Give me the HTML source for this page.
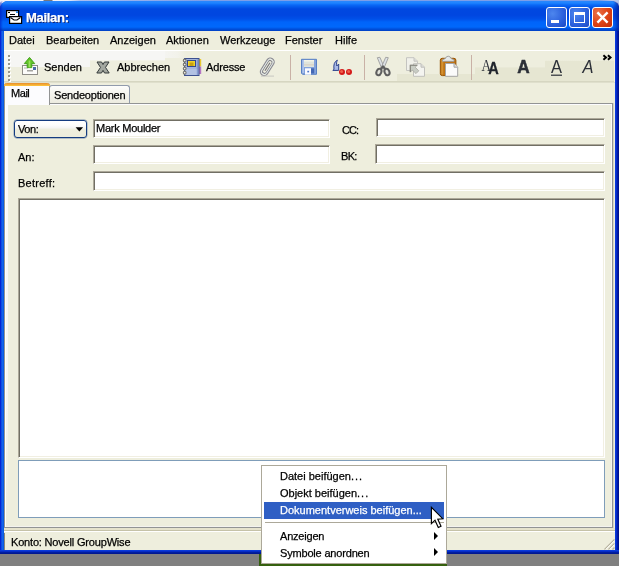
<!DOCTYPE html>
<html lang="de">
<head>
<meta charset="utf-8">
<title>Mailan:</title>
<style>
*{box-sizing:border-box;margin:0;padding:0}
html,body{width:619px;height:566px;overflow:hidden;background:#808080}
body{position:relative;font-family:"Liberation Sans",sans-serif;font-size:11px;color:#000;line-height:13px}
.a{position:absolute}
.t{position:absolute;white-space:nowrap;line-height:13px;will-change:transform;-webkit-text-stroke:.25px currentColor}
#topstrip{left:0;top:0;width:619px;height:3px;background:linear-gradient(to right,#f2f2f8 0,#f2f2f8 43px,#77777c 44px,#77777c 52px,#f2f2f8 53px,#e8ecf8 68px,#a9bdf0 80px,#7d9ee8 200px,#7d9ee8 600px,#b4c2e8 612px)}
#win{left:0;top:1px;width:619px;height:553px;border-radius:8px 8px 0 0;
 background:linear-gradient(to right,#0019cf 0,#0831d9 1px,#166aee 2px,#0855dd 4px,#0855dd 615px,#0a3ce0 615px,#0634d6 616px,#001aa8 617.500px,#000c80 619px)}
#winbot{left:0;top:550px;width:619px;height:4px;background:linear-gradient(to bottom,#0a45dc 0,#0831d9 1px,#001ea0 2.5px,#00138c 4px)}
#title{left:0;top:1px;width:619px;height:30px;border-radius:8px 8px 0 0;
 background:linear-gradient(to bottom,#2a86fc 0,#1e84ff 2px,#0a68f6 4px,#0458ea 6px,#0048e0 8px,#0046e0 14px,#0050e8 18px,#0064fa 21px,#0068fc 26px,#0050dc 28px,#0040c4 30px)}
#titletxt{left:26px;top:10px;font-weight:bold;font-size:13px;color:#fff;text-shadow:1px 1px 0 #0a1f6e;line-height:15px;letter-spacing:-.3px}
.tb{top:7px;width:21px;height:21px;border:1px solid #fff;border-radius:3px;background:radial-gradient(circle at 30% 30%,#4d86ee 0,#2a5fdc 60%,#1c49c4 100%)}
#bclose{background:radial-gradient(circle at 25% 25%,#ea7048 0,#de4418 50%,#c02c08 100%)}
#client{left:4px;top:31px;width:611px;height:519px;background:#eeeedd}
#toolbar{left:4px;top:51px;width:611px;height:30px;background:#eeeede}
#tbtop{left:4px;top:50px;width:611px;height:1px;background:#fff}
#tbbot{left:4px;top:81px;width:611px;height:2px;background:linear-gradient(to bottom,#d4d4be 0,#d8d8c4 1px,#e6e6d4 2px)}
#tbright{left:614px;top:50px;width:1px;height:32px;background:#f8f2da}
.sep{position:absolute;top:55px;width:1px;height:25px;background:#c9b1a6}
.inp{position:absolute;background:#fff;border:1px solid;border-color:#aca899 #fff #fff #aca899;box-shadow:inset 1px 1px 0 #716f64,inset -1px -1px 0 #f1efe2}
.arr{position:absolute;width:0;height:0;border:4px solid transparent;border-left:4px solid #000;border-right:none}
</style>
</head>
<body>
<div class="a" style="left:0;top:0;width:10px;height:10px;background:#e4e9f6"></div><div class="a" style="left:609px;top:0;width:10px;height:10px;background:#a4b4e4"></div>
<div id="topstrip" class="a"></div>
<div id="win" class="a"></div>
<div id="winbot" class="a"></div>
<div id="title" class="a"></div>
<svg class="a" style="left:6px;top:10px" width="17" height="15" viewBox="0 0 17 15">
 <rect x=".6" y=".6" width="12" height="6.800" fill="#fff" stroke="#000" stroke-width="1.200"/>
 <rect x="2" y="2" width="2" height="1" fill="#000"/><rect x="4" y="4" width="5" height="1" fill="#000"/><rect x="10" y="1.200" width="2" height="1.800" fill="#2a8cf0"/>
 <rect x="3.600" y="6.600" width="12" height="6.800" fill="#fff" stroke="#000" stroke-width="1.200"/>
 <path d="M4.500 7.500 L8 10 L11 10 L14.500 7.500" fill="none" stroke="#000" stroke-width="1.100"/>
</svg>
<div class="a" style="left:613px;top:1px;width:6px;height:30px;border-radius:0 8px 0 0;background:linear-gradient(to right,rgba(0,30,160,0),rgba(0,24,150,.75))"></div>
<div class="a" style="left:0;top:1px;width:3px;height:30px;border-radius:8px 0 0 0;background:linear-gradient(to left,rgba(0,30,200,0),rgba(0,24,190,.6))"></div>
<div id="titletxt" class="t">Mailan:</div>
<div class="a tb" style="left:546px"><div class="a" style="left:4px;top:12px;width:8px;height:3px;background:#fff"></div></div>
<div class="a tb" style="left:569px"><div class="a" style="left:4px;top:4px;width:11px;height:11px;border:1px solid #fff;border-top-width:3px"></div></div>
<div class="a tb" id="bclose" style="left:592px">
 <svg class="a" style="left:0;top:0" width="19" height="19" viewBox="0 0 19 19"><path d="M4.400 4.400 L14.600 14.600 M14.600 4.400 L4.400 14.600" stroke="#fff" stroke-width="2.400" fill="none"/></svg>
</div>

<div id="client" class="a"></div>
<!-- menu bar -->
<span class="t" style="left:9px;top:34px">Datei</span>
<span class="t" style="left:46px;top:34px">Bearbeiten</span>
<span class="t" style="left:110px;top:34px">Anzeigen</span>
<span class="t" style="left:166px;top:34px">Aktionen</span>
<span class="t" style="left:220px;top:34px">Werkzeuge</span>
<span class="t" style="left:285px;top:34px">Fenster</span>
<span class="t" style="left:335px;top:34px">Hilfe</span>

<!-- toolbar -->
<div id="toolbar" class="a"></div>
<div class="a" style="left:4px;top:51px;width:86px;height:30px;background:linear-gradient(to bottom,#f6f6f4 0,#f6f6f4 15.5px,#eeeede 16.5px,#eeeede 30px)"></div>
<div class="a" style="left:90px;top:51px;width:75px;height:30px;background:linear-gradient(to bottom,#f6f6f4 0,#f6f6f4 8.9px,#eeeede 9.9px,#eeeede 30px)"></div>
<div class="a" style="left:165px;top:51px;width:21px;height:7px;background:linear-gradient(to right,#f4f4f0 0,#f2f2ea 60%,#eeeede 100%)"></div>
<div class="a" style="left:240px;top:51px;width:78px;height:30px;background:linear-gradient(to bottom,#eeeede 0,#eeeede 30px)"></div>
<div class="a" style="left:318px;top:51px;width:79px;height:30px;background:linear-gradient(to bottom,#eeeede 0,#eeeede 30px)"></div>
<div class="a" style="left:397px;top:51px;width:78px;height:30px;background:linear-gradient(to bottom,#eeeede 0,#eeeede 22.5px,#e6e6d2 23.5px)"></div>
<div class="a" style="left:475px;top:51px;width:70px;height:30px;background:linear-gradient(to bottom,#eeeede 0,#eeeede 15.9px,#e6e6d2 16.9px)"></div>
<div class="a" style="left:545px;top:51px;width:70px;height:30px;background:linear-gradient(to bottom,#eeeede 0,#eeeede 9.3px,#e6e6d2 10.3px)"></div>
<div id="tbtop" class="a"></div><div id="tbbot" class="a"></div><div id="tbright" class="a"></div>
<div class="a" style="left:9px;top:56px;width:2px;height:26px;background:repeating-linear-gradient(to bottom,#fff 0,#fff 2px,transparent 2px,transparent 4px)"></div>
<div class="a" style="left:8px;top:55px;width:2px;height:26px;background:repeating-linear-gradient(to bottom,#98968a 0,#98968a 2px,transparent 2px,transparent 4px)"></div>
<span class="t" style="left:43.500px;top:61px">Senden</span>
<span class="t" style="left:117px;top:61px">Abbrechen</span>
<span class="t" style="left:206px;top:61px;letter-spacing:-.15px">Adresse</span>
<div class="sep" style="left:290px"></div>
<div class="sep" style="left:364px"></div>
<div class="sep" style="left:471px"></div>
<!--ICONS-START-->
<svg class="a" style="left:0;top:50px" width="619" height="32" viewBox="0 50 619 32">
 <!-- send -->
 <rect x="22.500" y="65.500" width="15" height="9" fill="#fcfcfa" stroke="#8e8d88"/>
 <rect x="33" y="67" width="3" height="3" fill="#4a6ca8"/>
 <rect x="24" y="67.500" width="4" height="1" fill="#b4b4b0"/>
 <rect x="27" y="70" width="6" height="1.500" fill="#a4a4a0"/>
 <path d="M29.500 57.400 L34.700 63.600 L31.800 63.600 L31.800 67.600 L27.200 67.600 L27.200 63.600 L24.300 63.600 Z" fill="#62c428" stroke="#3a9c12" stroke-width=".9" stroke-linejoin="round"/>
 <rect x="28.700" y="60.500" width="1.600" height="6.800" fill="#9be060"/>
 <!-- X -->
 <path d="M97 62 L101.600 62 L103 64.600 L104.400 62 L109 62 L105.500 67.400 L109.200 73 L104.500 73 L103 70.300 L101.500 73 L96.800 73 L100.500 67.400 Z" fill="#a4a8a0" stroke="#343a3a" stroke-width="1" stroke-linejoin="round"/>
 <!-- address book -->
 <rect x="199" y="59" width="2.200" height="7.500" fill="#e8c830"/>
 <rect x="199" y="66.500" width="2.200" height="7.500" fill="#b476c4"/>
 <rect x="184.500" y="58.500" width="14.500" height="17" fill="#a4b5dc" stroke="#3c5090"/>
 <rect x="185.500" y="69" width="12.500" height="6" fill="#bccae8" opacity=".6"/><rect x="196.800" y="59.500" width="1.400" height="15.500" fill="#7088c4" opacity=".7"/>
 <rect x="187.500" y="60.500" width="8" height="6" fill="#f0d228" stroke="#34488c"/>
 <rect x="189.500" y="62.500" width="4" height="3.500" fill="#c8a010"/>
 <g fill="#ecece8" stroke="#74746f" stroke-width="1.100">
  <circle cx="184.700" cy="60.500" r="1.400"/><circle cx="184.700" cy="64.500" r="1.400"/><circle cx="184.700" cy="68.600" r="1.400"/><circle cx="184.700" cy="72.700" r="1.400"/>
 </g>
 <!-- paperclip -->
 <g transform="rotate(32 267.500 66.500)" fill="none">
  <rect x="263.700" y="57.300" width="7.600" height="19.200" rx="3.800" stroke="#8c8c94" stroke-width="1.300"/>
  <rect x="265.500" y="59.800" width="4.200" height="14.400" rx="2.100" stroke="#84848c" stroke-width="1.100"/><path d="M267.600 62 L267.600 71.500" stroke="#74747c" stroke-width="1.200"/>
  <rect x="264.700" y="58.400" width="5.600" height="17" rx="2.800" stroke="#dfe7e7" stroke-width=".8"/>
 </g>
 <rect x="261" y="75.500" width="13" height="1.200" fill="#c4c4c0" opacity=".8"/>
 <!-- floppy -->
 <path d="M301.500 59.300 L316.500 59.300 L316.500 74.300 L302.500 74.300 L301.500 73.300 Z" fill="#84a3dc" stroke="#5880c4"/>
 <rect x="302.500" y="60" width="1.300" height="13" fill="#b8ccf0"/>
 <rect x="304" y="60" width="10" height="7" fill="#dfe4dc"/>
 <rect x="304" y="60" width="10" height="1.500" fill="#f4f4e8"/>
 <rect x="304" y="64.500" width="10" height=".8" fill="#d8c8b8"/>
 <rect x="305" y="68.300" width="6" height="6.400" fill="#fbfbff"/>
 <rect x="311" y="68.300" width="3.200" height="5.200" fill="#4468b4"/>
 <rect x="307.300" y="70.800" width="1.800" height="1.600" fill="#4f78c8"/>
 <!-- quill + dots -->
 <path d="M337.400 60.200 C334.500 61.500 333.300 64.500 334 69.500 L332.800 70.400 L338.700 70.400 L338.700 64 L336.800 66 C336.300 63.500 336.600 61.800 337.400 60.200 Z" fill="#a9bae6" stroke="#2a3f8c" stroke-width="1" stroke-linejoin="round"/>
 <circle cx="342" cy="71.900" r="3" fill="#d41a1a"/><circle cx="341.600" cy="71.500" r="1.500" fill="#f0604c"/>
 <circle cx="349" cy="71.900" r="3" fill="#d41a1a"/><circle cx="348.600" cy="71.500" r="1.500" fill="#f0604c"/>
 <!-- scissors -->
 <path d="M377.300 57.700 L379.900 57.300 L384.600 68 L382 69 Z" fill="#dce0e4" stroke="#949494" stroke-width=".8"/>
 <path d="M388.300 57.700 L385.700 57.300 L381 68 L383.600 69 Z" fill="#dce0e4" stroke="#949494" stroke-width=".8"/>
 <ellipse cx="378.900" cy="72" rx="2.400" ry="3.300" fill="#e4e4dc" stroke="#5e5e5e" stroke-width="2" transform="rotate(22 378.900 72)"/>
 <ellipse cx="387" cy="72" rx="2.400" ry="3.300" fill="#e4e4dc" stroke="#5e5e5e" stroke-width="2" transform="rotate(-22 387 72)"/>
 <path d="M380.300 69.200 L383 66.600 L385.700 69.200" fill="none" stroke="#5e5e5e" stroke-width="2.200"/>
 <!-- copy (disabled) -->
 <path d="M406.500 57.700 L414 57.700 L417.500 61.200 L417.500 70.500 L406.500 70.500 Z" fill="#f0f0ea" stroke="#c4c4c0"/>
 <path d="M414 57.700 L414 61.200 L417.500 61.200" fill="#dcdcd8" stroke="#c4c4c0"/>
 <path d="M413.500 63.700 L421 63.700 L424.500 67.200 L424.500 76.300 L413.500 76.300 Z" fill="#f4f4f0" stroke="#c0c0bc"/>
 <path d="M421 63.700 L421 67.200 L424.500 67.200" fill="#dcdcd8" stroke="#c0c0bc"/>
 <path d="M410.300 65.200 L417.300 65.200 L415.200 67.200 L418.800 70.800 L416 73.600 L412.400 70 L410.300 72.200 Z" fill="#c8ccc4" stroke="#a8a8a0" stroke-width=".8"/><path d="M410.300 72 L410.300 65.200 L417.300 65.200" fill="none" stroke="#84847c" stroke-width="1.100"/>
 <!-- paste -->
 <rect x="440.300" y="58.300" width="15.600" height="17.300" rx="2" fill="#c07414" stroke="#985404"/>
 <rect x="441.300" y="59.500" width="2" height="15" fill="#d89838" opacity=".8"/>
 <path d="M442.500 61.300 L442.500 59.700 L445.300 58.600 L446.300 56.900 Q448.200 55.500 450.100 56.900 L451.100 58.600 L454 59.700 L454 61.300 Z" fill="#e6eaea" stroke="#9a9a9a" stroke-width=".9"/>
 <path d="M445.500 63.500 L454 63.500 L457.700 67.200 L457.700 76.300 L445.500 76.300 Z" fill="#fbfbfb" stroke="#a4a4a4"/>
 <path d="M454 63.500 L454 67.200 L457.700 67.200" fill="#e0e0e0" stroke="#a4a4a4"/>
 <!-- chevron -->
 <path d="M603.400 55.200 L606 57.500 L603.400 59.800 M607.900 55.200 L610.500 57.500 L607.900 59.800" fill="none" stroke="#000" stroke-width="2"/>
 <!-- font icons -->
 <text x="481.500" y="70.800" font-family="Liberation Serif,serif" font-size="17" fill="#30343c" textLength="9.600" lengthAdjust="spacingAndGlyphs">A</text>
 <text x="488.200" y="74.400" font-family="Liberation Sans,sans-serif" font-weight="bold" font-size="16.500" fill="#20242c" stroke="#20242c" stroke-width=".3" textLength="10.500" lengthAdjust="spacingAndGlyphs">A</text>
 <text x="517.300" y="73.100" font-family="Liberation Sans,sans-serif" font-weight="bold" font-size="17.500" fill="#2c3038" stroke="#2c3038" stroke-width=".5" textLength="12.400" lengthAdjust="spacingAndGlyphs">A</text>
 <text x="551" y="73.100" font-family="Liberation Sans,sans-serif" font-size="17.500" fill="#2c3038" textLength="11" lengthAdjust="spacingAndGlyphs">A</text>
 <rect x="551" y="74.600" width="11" height="1.200" fill="#2c3038"/>
 <text x="582.500" y="73.100" font-family="Liberation Sans,sans-serif" font-style="italic" font-size="17.500" fill="#2c3038" textLength="11" lengthAdjust="spacingAndGlyphs">A</text>
</svg>
<!--ICONS-END-->

<!-- tab pane -->
<div class="a" style="left:4px;top:103px;width:609px;height:425px;border:1px solid #929494;background:linear-gradient(to bottom,#fcfcfe,#f4f3ee)"></div>
<div class="a" style="left:5px;top:104px;width:1px;height:423px;background:#fff"></div>
<div class="a" style="left:613px;top:103px;width:1px;height:425px;background:#d6d4c2"></div>
<div class="a" style="left:8px;top:105px;width:603px;height:421px;background:#eeeedd"></div>
<div class="a" style="left:6px;top:400px;width:2px;height:126px;background:linear-gradient(to bottom,rgba(236,233,216,0),#eeeedd)"></div>
<!-- tabs -->
<div class="a" style="left:49px;top:85px;width:80.500px;height:18px;border:1px solid #919bac;border-bottom:none;border-radius:3px 3px 0 0;background:linear-gradient(#fdfdfb,#ecebe0)"></div>
<span class="t" style="left:53.500px;top:89px;letter-spacing:-.2px">Sendeoptionen</span>
<div class="a" style="left:4px;top:83px;width:46px;height:22px;border:1px solid #929494;border-bottom:none;border-top:none;border-radius:3px 3px 0 0;background:#fcfcfe"></div>
<div class="a" style="left:4px;top:83px;width:46px;height:3px;border-radius:3px 3px 0 0;background:linear-gradient(#e68b2c,#ffc73c)"></div>
<span class="t" style="left:11px;top:87px;letter-spacing:-.45px">Mail</span>

<!-- form -->
<div class="a" style="left:14px;top:120px;width:73px;height:18px;border:1px solid #143c80;border-radius:3px;box-shadow:0 0 0 .4px rgba(20,60,128,.55);background:linear-gradient(to bottom,#fff 0,#fdfdfc 4px,#f6f6f4 6.500px,#eeeede 8.500px,#ececdb 100%)"></div>
<span class="t" style="left:18px;top:123px;letter-spacing:-.4px">Von:</span>
<svg class="a" style="left:75px;top:127px" width="9" height="5" viewBox="0 0 9 5"><path d="M.6 .3 L8.100 .3 L4.350 4.400 Z" fill="#000"/></svg>
<div class="inp" style="left:93px;top:119px;width:237px;height:19px"></div>
<span class="t" style="left:95.500px;top:122px;letter-spacing:-.25px">Mark Moulder</span>
<span class="t" style="left:342px;top:124px;letter-spacing:-.9px">CC:</span>
<div class="inp" style="left:376px;top:118px;width:229px;height:19px"></div>
<span class="t" style="left:18px;top:151px">An:</span>
<div class="inp" style="left:93px;top:145px;width:237px;height:19px"></div>
<span class="t" style="left:341px;top:150px;letter-spacing:-.7px">BK:</span>
<div class="inp" style="left:375px;top:144px;width:230px;height:20px"></div>
<span class="t" style="left:18px;top:177px;letter-spacing:.25px">Betreff:</span>
<div class="inp" style="left:93px;top:171px;width:512px;height:20px"></div>
<div class="inp" style="left:18px;top:198px;width:587px;height:260px"></div>
<div class="a" style="left:18px;top:460px;width:587px;height:58px;background:#fff;border:1px solid #7f9db9"></div>

<!-- status bar -->
<div class="a" style="left:4px;top:528px;width:611px;height:2px;background:#e6e3cc"></div>
<div class="a" style="left:4px;top:530px;width:611px;height:1px;background:#c5c2a8"></div>
<div class="a" style="left:4px;top:531px;width:611px;height:1px;background:#fff"></div>
<div class="a" style="left:4px;top:533px;width:1px;height:17px;background:#8a887a"></div>
<span class="t" style="left:11px;top:536px;letter-spacing:-.18px">Konto: Novell GroupWise</span>
<svg class="a" style="left:603px;top:538px" width="12" height="12" viewBox="0 0 12 12"><path d="M11.500 1.500 L1.500 11.500 M11.500 5.500 L5.500 11.500 M11.500 9.500 L9.500 11.500" stroke="#b8b4a0" stroke-width="1.400"/><path d="M11.500 2.500 L2.500 11.500 M11.500 6.500 L6.500 11.500" stroke="#fff" stroke-width=".8"/></svg>

<!-- desktop strip behind menu -->
<div class="a" style="left:259px;top:554px;width:188px;height:12px;background:#35600f"></div>
<!-- context menu -->
<div class="a" style="left:261px;top:465px;width:186px;height:99px;background:#fff;border:1px solid #aca899"></div>
<span class="t" style="left:280px;top:470px">Datei beifügen<span style="letter-spacing:1px">...</span></span>
<span class="t" style="left:280px;top:487px">Objekt beifügen<span style="letter-spacing:1px">...</span></span>
<div class="a" style="left:264px;top:502px;width:180px;height:17px;background:#2f5fc4"></div>
<span class="t" style="left:280px;top:504px;color:#fff">Dokumentverweis beifügen...</span>
<div class="a" style="left:265px;top:522px;width:179px;height:1px;background:#aca899"></div>
<span class="t" style="left:280px;top:530px;letter-spacing:-.2px">Anzeigen</span>
<span class="t" style="left:280px;top:547px;letter-spacing:-.18px">Symbole anordnen</span>
<div class="arr" style="left:434px;top:532px"></div>
<div class="arr" style="left:434px;top:548px"></div>
<svg class="a" style="left:430px;top:506px" width="14" height="23" viewBox="0 0 14 23"><path d="M1.400 1.300 L1.400 17.600 L5 14.200 L8.300 21.500 L11 20.300 L7.800 13.200 L12.700 12.700 Z" fill="#fff" stroke="#000" stroke-width="1.150" stroke-linejoin="miter"/></svg>
</body>
</html>
